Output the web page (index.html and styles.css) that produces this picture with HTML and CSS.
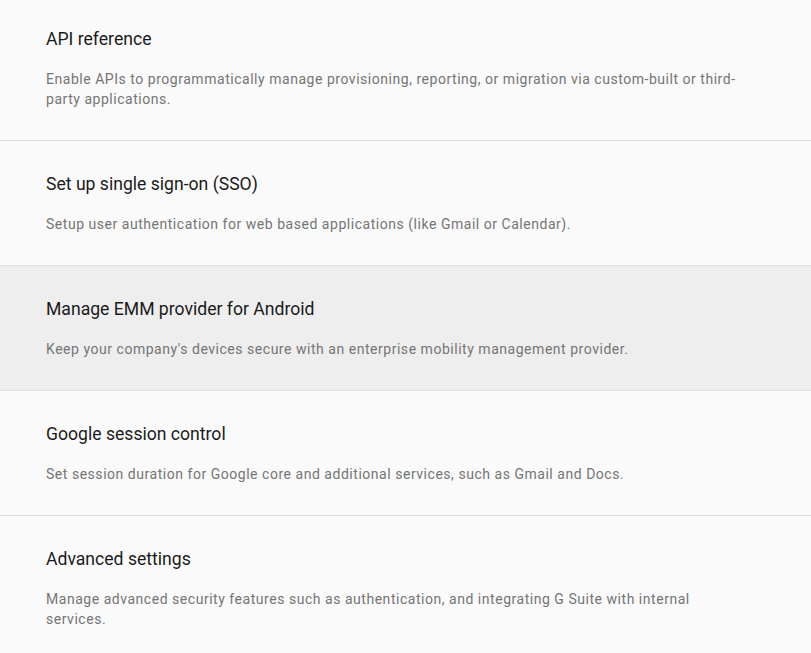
FILE: index.html
```html
<!DOCTYPE html>
<html lang="en">

<head>
    <meta charset="UTF-8">
    <meta name="viewport" content="width=device-width, initial-scale=1.0">
    <title>Security settings</title>
    <link rel="stylesheet" href="styles.css">
</head>

<body>
    <div class="list">
        <div class="item">
            <h2 class="title">API reference</h2>
            <p class="desc">Enable APIs to programmatically manage provisioning, reporting, or migration via custom-built or third-party applications.</p>
        </div>
        <div class="item">
            <h2 class="title">Set up single sign-on (SSO)</h2>
            <p class="desc">Setup user authentication for web based applications (like Gmail or Calendar).</p>
        </div>
        <div class="item active">
            <h2 class="title">Manage EMM provider for Android</h2>
            <p class="desc">Keep your company's devices secure with an enterprise mobility management provider.</p>
        </div>
        <div class="item">
            <h2 class="title">Google session control</h2>
            <p class="desc">Set session duration for Google core and additional services, such as Gmail and Docs.</p>
        </div>
        <div class="item">
            <h2 class="title">Advanced settings</h2>
            <p class="desc">Manage advanced security features such as authentication, and integrating G Suite with internal services.</p>
        </div>
    </div>
</body>

</html>
```

FILE: styles.css
```css
* {
    margin: 0;
    padding: 0;
    box-sizing: border-box;
}

html,
body {
    height: 100%;
    overflow: hidden;
    background-color: #fafafa;
    font-family: Roboto, "Liberation Sans", sans-serif;
}

.list {
    margin-top: -4px;
}

.item {
    padding: 31px 55px 31px 46px;
    border-bottom: 1px solid #e0e0e0;
    cursor: pointer;
}

.item.active {
    background-color: #eeeeee;
}

.item .title {
    font-size: 17.6px;
    font-weight: 400;
    line-height: 24px;
    color: #1a1a1a;
}

.item .desc {
    max-width: 700px;
    margin-top: 18px;
    font-size: 14px;
    letter-spacing: 0.53px;
    line-height: 20px;
    color: #757575;
}
```
